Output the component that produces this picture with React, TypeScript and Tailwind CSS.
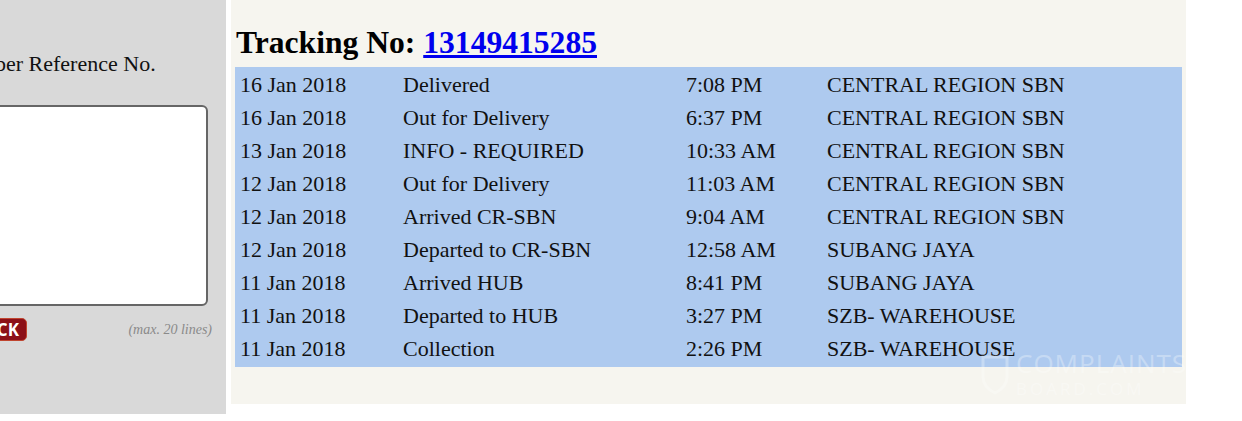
import type { ReactNode } from "react";

interface TrackRow {
  date: string;
  status: string;
  time: string;
  location: string;
}

const rows: TrackRow[] = [
  { date: "16 Jan 2018", status: "Delivered", time: "7:08 PM", location: "CENTRAL REGION SBN" },
  { date: "16 Jan 2018", status: "Out for Delivery", time: "6:37 PM", location: "CENTRAL REGION SBN" },
  { date: "13 Jan 2018", status: "INFO - REQUIRED", time: "10:33 AM", location: "CENTRAL REGION SBN" },
  { date: "12 Jan 2018", status: "Out for Delivery", time: "11:03 AM", location: "CENTRAL REGION SBN" },
  { date: "12 Jan 2018", status: "Arrived CR-SBN", time: "9:04 AM", location: "CENTRAL REGION SBN" },
  { date: "12 Jan 2018", status: "Departed to CR-SBN", time: "12:58 AM", location: "SUBANG JAYA" },
  { date: "11 Jan 2018", status: "Arrived HUB", time: "8:41 PM", location: "SUBANG JAYA" },
  { date: "11 Jan 2018", status: "Departed to HUB", time: "3:27 PM", location: "SZB- WAREHOUSE" },
  { date: "11 Jan 2018", status: "Collection", time: "2:26 PM", location: "SZB- WAREHOUSE" },
];

function Cell({ children }: { children: ReactNode }) {
  return <div className="whitespace-nowrap">{children}</div>;
}

function LookupPanel() {
  return (
    <div className="w-[226px] h-[414px] shrink-0 overflow-hidden bg-[#d9d9d9]">
      <p className="mt-[51px] ml-[-49px] whitespace-nowrap text-[22px] leading-[26px] text-[#111]">
        Number Reference No.
      </p>
      <textarea
        className="block mt-[28px] ml-[-40px] w-[248px] h-[201px] resize-none rounded-[6px] border-2 border-[#666] bg-white"
        aria-label="Tracking numbers"
      />
      <div className="mt-[12px] flex items-center justify-between pr-[14px]">
        <button
          type="button"
          className="ml-[-44px] h-[23px] rounded-[5px] border border-[#c0452f] bg-[#8c1018] px-[7px] text-[17px] font-bold leading-[20px] text-white"
          style={{ fontFamily: "'Open Sans', 'Liberation Sans', sans-serif" }}
        >
          TRACK
        </button>
        <span className="text-[14px] italic text-[#8a8a8a]">(max. 20 lines)</span>
      </div>
    </div>
  );
}

export default function App() {
  return (
    <div
      className="relative flex w-[1242px] h-[421px] overflow-hidden bg-white text-[#111]"
      style={{ fontFamily: "'Liberation Serif', 'Times New Roman', serif" }}
    >
      <LookupPanel />
      <div className="ml-[5px] w-[955px] h-[404px] shrink-0 bg-[#f6f5ef] px-[4px]">
        <h2 className="mt-[25px] ml-[1px] text-[31.6px] font-bold leading-[36px] text-black">
          Tracking No:{" "}
          <a href="#" className="text-[#0000ee] underline">
            13149415285
          </a>
        </h2>
        <div className="mt-[6px] bg-[#aecaef] pt-[1px] pb-[2px] pl-[5px] text-[22px] leading-[33px]">
          {rows.map((row, i) => (
            <div key={i} className="grid grid-cols-[163px_283px_141px_1fr]">
              <Cell>{row.date}</Cell>
              <Cell>{row.status}</Cell>
              <Cell>{row.time}</Cell>
              <Cell>{row.location}</Cell>
            </div>
          ))}
        </div>
      </div>

      {/* faint watermark */}
      <div
        className="pointer-events-none absolute left-[980px] top-[350px] flex items-center gap-[6px] text-white opacity-30"
        style={{ fontFamily: "'Open Sans', 'Liberation Sans', sans-serif" }}
      >
        <svg width="30" height="42" viewBox="0 0 30 42" fill="none" stroke="white" strokeWidth="3">
          <path d="M3 4h24v20c0 8-6 13-12 16C9 37 3 32 3 24z" />
        </svg>
        <div className="flex flex-col gap-[4px]">
          <div className="text-[26px] leading-[26px] tracking-[1px]">COMPLAINTS</div>
          <div className="text-[17px] leading-[17px] tracking-[3px]">BOARD.COM</div>
        </div>
      </div>
    </div>
  );
}
